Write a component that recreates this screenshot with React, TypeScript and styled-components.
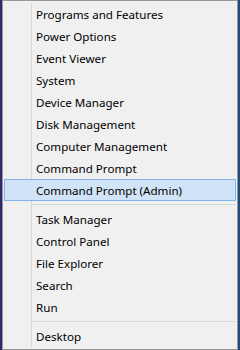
import * as React from "react";
import styled, { createGlobalStyle } from "styled-components";

const GlobalStyle = createGlobalStyle`
  html, body {
    margin: 0;
    padding: 0;
    width: 240px;
    height: 350px;
    overflow: hidden;
  }
  body {
    font-family: "Noto Sans", "Open Sans", Arial, sans-serif;
  }
`;

const Desk = styled.div`
  display: flex;
  width: 240px;
  height: 350px;
  background: linear-gradient(90deg, #2f2a70 0 2px, #1f4d78 2px);
`;

const Menu = styled.div`
  margin-left: 2px;
  width: 236px;
  height: 350px;
  box-sizing: border-box;
  border: 1px solid #979797;
  background-color: #f0f0f0;
  background-image: linear-gradient(#d7d7d7, #d7d7d7);
  background-repeat: no-repeat;
  background-position: 28px 2px;
  background-size: 1px calc(100% - 4px);
  padding: 2px 1px;
  display: flex;
  flex-direction: column;
`;

const Item = styled.div<{ $active?: boolean }>`
  height: 22px;
  box-sizing: border-box;
  padding-left: 31px;
  border: 1px solid ${(p) => (p.$active ? "#84b4ea" : "transparent")};
  background: ${(p) => (p.$active ? "#d1e3f6" : "transparent")};
  display: flex;
  align-items: center;
  font-size: 11.6px;
  color: #000;
  white-space: nowrap;
`;

const Separator = styled.div`
  height: 7px;
  display: flex;
  align-items: center;
  padding-left: 28px;

  &::after {
    content: "";
    flex: 1;
    height: 1px;
    background: #d7d7d7;
  }
`;

const groups = [
  [
    "Programs and Features",
    "Power Options",
    "Event Viewer",
    "System",
    "Device Manager",
    "Disk Management",
    "Computer Management",
    "Command Prompt",
    "Command Prompt (Admin)",
  ],
  ["Task Manager", "Control Panel", "File Explorer", "Search", "Run"],
  ["Desktop"],
];

export default function App() {
  return (
    <>
      <GlobalStyle />
      <Desk>
        <Menu>
          {groups.map((g, gi) => (
            <React.Fragment key={gi}>
              {gi > 0 && <Separator />}
              {g.map((label) => (
                <Item key={label} $active={label === "Command Prompt (Admin)"}>
                  {label}
                </Item>
              ))}
            </React.Fragment>
          ))}
        </Menu>
      </Desk>
    </>
  );
}
